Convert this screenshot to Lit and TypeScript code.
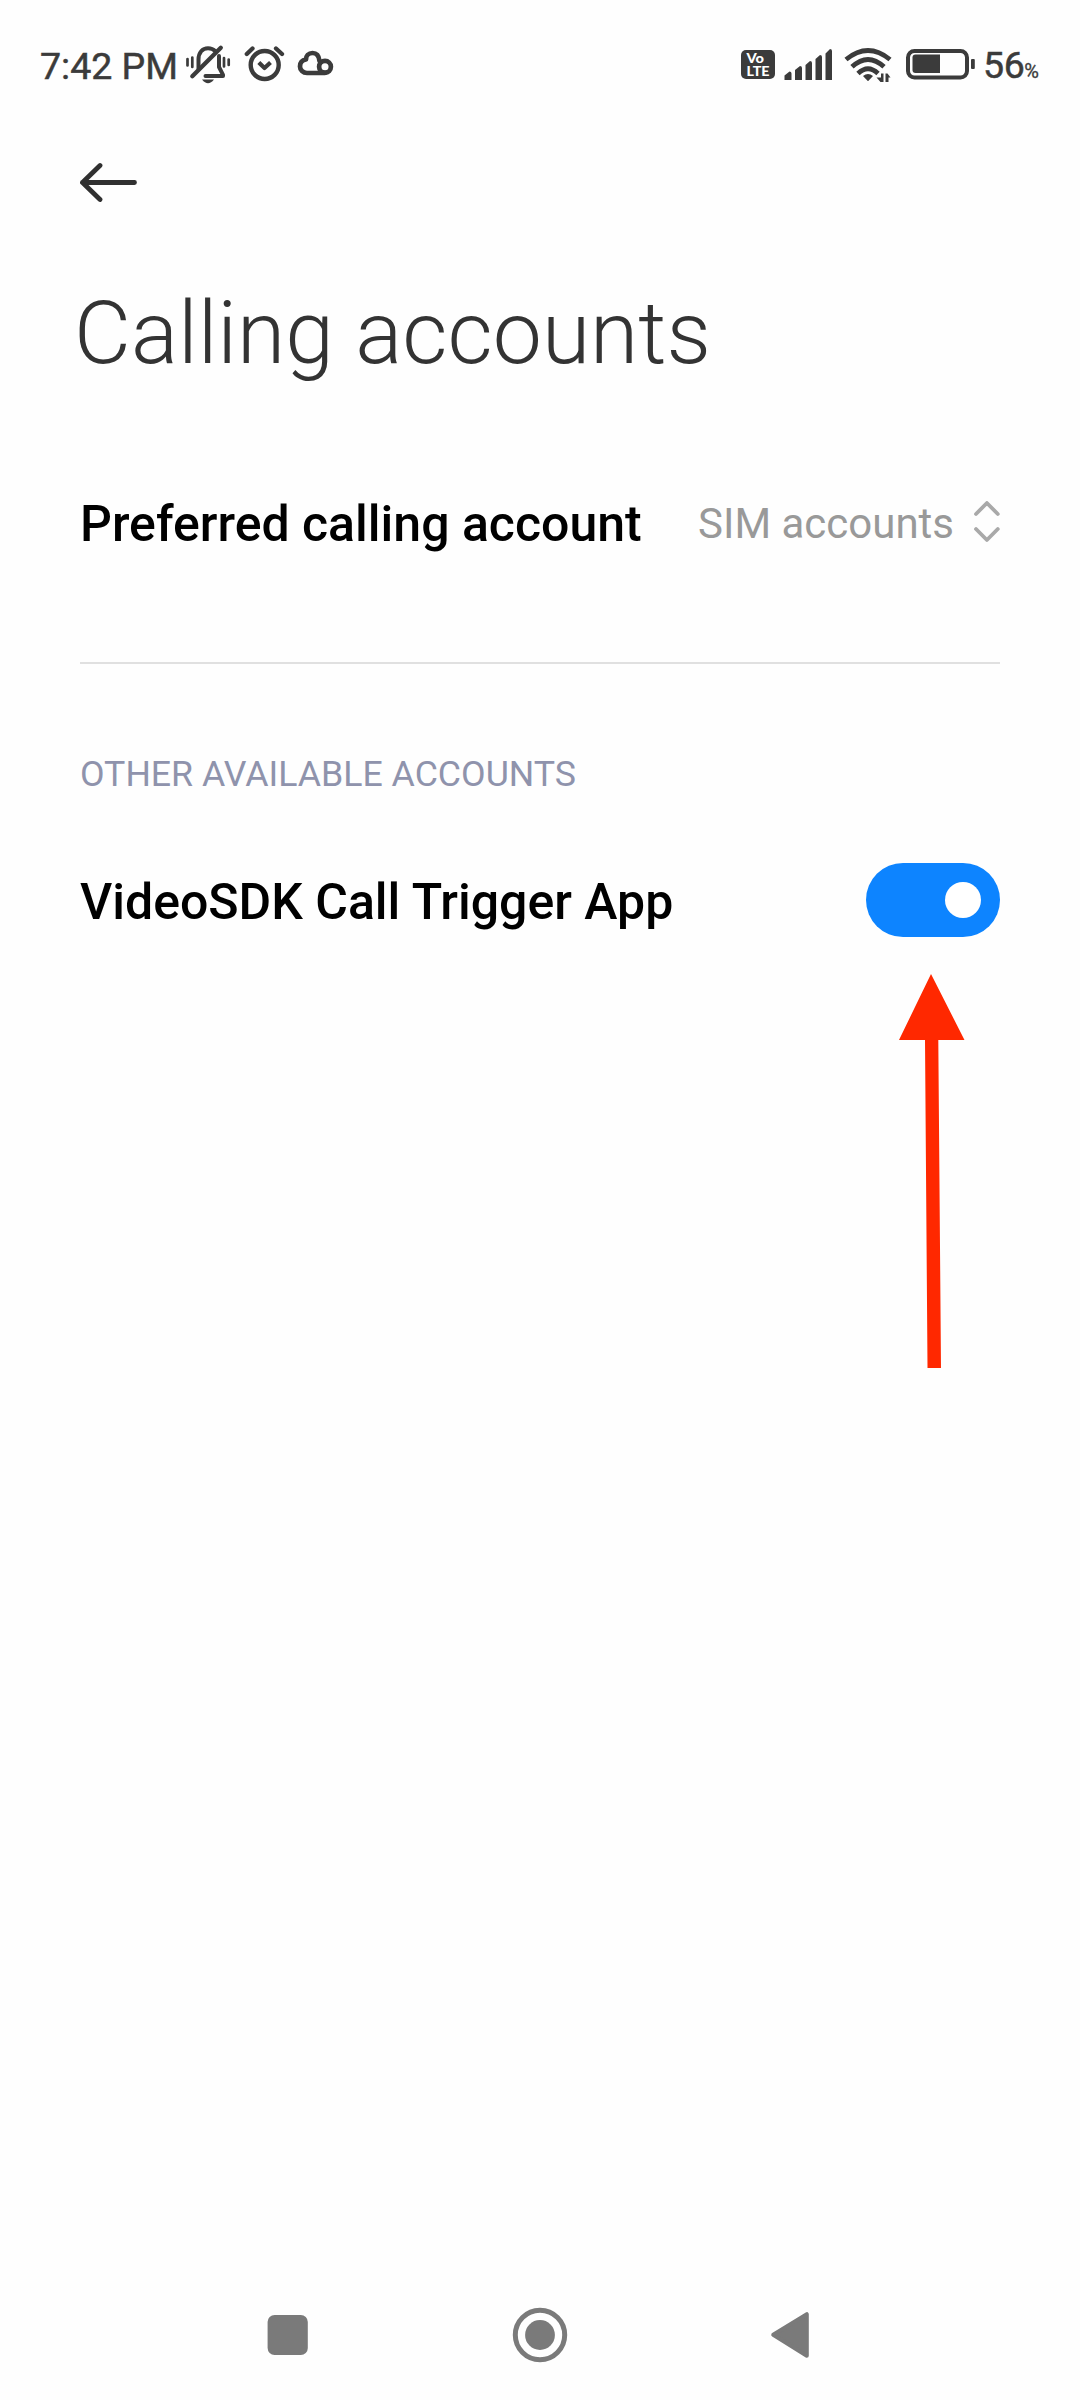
import { LitElement, html, css } from "lit";
import { customElement, property, state } from "lit/decorators.js";

@customElement("status-bar")
class StatusBar extends LitElement {
  static styles = css`
    :host { display: flex; height: 132px; box-sizing: border-box; padding: 0 41px 0 40px; justify-content: space-between; color: #3b3b3b; }
    .side { display: flex; height: 132px; align-items: center; }
    .time { font-size: 37.5px; line-height: 132px; font-weight: 400; -webkit-text-stroke: 0.5px #3b3b3b; width: 146px; white-space: nowrap; }
    .level { font-size: 37.5px; line-height: 132px; -webkit-text-stroke: 0.5px #3b3b3b; white-space: nowrap; display: flex; align-items: baseline; letter-spacing: -0.4px; padding-top: 4px; }
    .percent { font-size: 20px; letter-spacing: 0; -webkit-text-stroke: 0.3px #3b3b3b; }
    svg { display: block; }
    .lte { font: 900 13.5px Lato, "Open Sans", sans-serif; fill: #fff; }
  `;
  render() {
    return html`
      <div class="side">
        <div class="time">7:42 PM</div>
        <svg width="150" height="50" viewBox="186 41 150 50" fill="none" stroke="#3b3b3b" stroke-linecap="round" stroke-linejoin="round">
          <path d="M187.500 59v6.500M192.300 57.500v9.500M224 58v8.500M228.700 59.500v5.500" stroke-width="2.700"/>
          <path d="M198.500 69V59.500C198.500 52.500 202.500 48.200 208 48.200C211 48.200 213.500 49.300 215.300 51.200" stroke-width="4"/>
          <path d="M219 56V67L223 74.800V76H205.500" stroke-width="4"/>
          <path d="M192.300 76.200L220.800 47.800" stroke-width="4.300"/>
          <path d="M202 79.500H214Q208 87 202 79.500Z" fill="#3b3b3b" stroke="none"/>
          <circle cx="264.700" cy="65" r="14" stroke-width="4.400"/>
          <path d="M258.800 62.500L264.500 68L270.500 62.500" stroke-width="4.200" stroke-linecap="butt"/>
          <path d="M246.800 54L252.500 48.500M276 48.500L282 54" stroke-width="4.300"/>
          <path d="M325 73H307C303 73 300 70 300 66.500C300 62.500 302.500 60 306 59.500C306 56 308.500 53 312.500 53C316.500 53 319 56 319.500 61" stroke-width="4.700"/>
          <circle cx="325" cy="66.800" r="5.900" stroke-width="4.700"/>
        </svg>
      </div>
      <div class="side">
        <svg width="243" height="50" viewBox="740 41 243 50" fill="#3b3b3b">
          <rect x="741" y="50" width="34" height="29" rx="5"/>
          <text class="lte" x="746.500" y="63" textLength="17.500" lengthAdjust="spacingAndGlyphs">Vo</text>
          <text class="lte" x="746.500" y="75.700" textLength="23" lengthAdjust="spacingAndGlyphs">LTE</text>
          <path d="M784.500 80V75.500L789.500 71.500Q791.500 71.500 791.500 73.500V80ZM795 80V70L800 66Q802 66 802 68V80ZM805.500 80V65L810 61Q812 61 812 63V80ZM815.500 80V59L820 55Q822 55 822 57V80ZM825.500 80V53.500L830 49Q832 49 832 51V80Z"/>
          <g fill="none" stroke="#3b3b3b" stroke-width="4.800">
            <path d="M846 59.500Q868 41.500 890 59.500"/>
            <path d="M852 66.800Q868 52 884 66.800"/>
            <path d="M858 73.500Q868 64 878 73.500"/>
          </g>
          <path d="M863 76Q868 72 873 76L868.500 80.800Q868 81.200 867.500 80.800Z"/>
          <path d="M881 73.500H883.500V82H880.500L876.500 77.500H881ZM885.500 73.500H887.500L890.500 77.500H888.500V82H885.500Z"/>
          <rect x="908" y="51" width="59" height="26.500" rx="6.500" fill="none" stroke="#3b3b3b" stroke-width="4"/>
          <path d="M915.500 54.500H940V73H915.500Q912.500 73 912.500 70V57.500Q912.500 54.500 915.500 54.500Z"/>
          <rect x="971" y="59" width="3.800" height="10" rx="1"/>
        </svg>
        <div class="level">56<span class="percent">%</span></div>
      </div>`;
  }
}

@customElement("toggle-switch")
class ToggleSwitch extends LitElement {
  @property({ type: Boolean }) on = false;
  static styles = css`
    :host { display: block; }
    .track { width: 134px; height: 74px; box-sizing: border-box; padding: 0 19px; border-radius: 37px; background: #c8c8c8; display: flex; align-items: center; }
    .on { background: #0d84ff; justify-content: flex-end; }
    .knob { width: 36px; height: 36px; border-radius: 50%; background: #fff; }
  `;
  render() {
    return html`<div class="track ${this.on ? "on" : ""}"><div class="knob"></div></div>`;
  }
}

@customElement("nav-bar")
class NavBar extends LitElement {
  static styles = css`
    :host { display: flex; height: 130px; align-items: center; justify-content: space-between; padding: 0 270px 0 267px; box-sizing: border-box; }
    svg { display: block; }
  `;
  render() {
    return html`
      <svg width="42" height="56" viewBox="267 2307 42 56"><rect x="267.600" y="2315" width="40.200" height="40" rx="7" fill="#7a7a7a"/></svg>
      <svg width="56" height="56" viewBox="0 0 56 56"><circle cx="28" cy="28" r="24.700" fill="none" stroke="#7a7a7a" stroke-width="5"/><circle cx="28" cy="28" r="14.900" fill="#7a7a7a"/></svg>
      <svg width="40" height="56" viewBox="770 2307 40 56"><path d="M773.200 2334.700L806.800 2314.200V2355.700Z" fill="#7a7a7a" stroke="#7a7a7a" stroke-width="4" stroke-linejoin="round"/></svg>`;
  }
}

@customElement("app-root")
class AppRoot extends LitElement {
  @state() private enabled = true;
  static styles = css`
    :host { display: flex; flex-direction: column; position: relative; width: 1080px; height: 2400px; background: #fefefe; font-family: Roboto, "Liberation Sans", sans-serif; overflow: hidden; }
    main { flex: 1; display: flex; flex-direction: column; padding: 0 80px; }
    svg { display: block; }
    .back { height: 101px; display: flex; align-items: center; }
    h1 { margin: 43px 0 0 -6px; height: 114px; line-height: 114px; font-size: 87.7px; font-weight: 300; color: #333; white-space: nowrap; }
    .row { display: flex; justify-content: space-between; align-items: center; white-space: nowrap; }
    .preferred { height: 120px; margin-top: 74px; padding-bottom: 78px; border-bottom: 2px solid #e0e0e0; }
    .label { font-size: 50px; line-height: 60px; font-weight: 500; color: #000; }
    .account .label { padding-top: 3px; }
    .choice { display: flex; align-items: center; gap: 19px; }
    .value { font-size: 42px; line-height: 60px; color: #999; }
    h2 { margin: 80px 0 0; height: 60px; line-height: 60px; font-size: 35.7px; font-weight: 400; color: #8f93ac; white-space: nowrap; }
    .account { height: 120px; margin-top: 36px; }
    .pointer { position: absolute; left: 895px; top: 970px; }
  `;
  render() {
    return html`
      <status-bar></status-bar>
      <main>
        <div class="back">
          <svg width="60" height="44" viewBox="80 161 60 44" fill="none" stroke="#303030" stroke-width="4.800" stroke-linecap="round" stroke-linejoin="round"><path d="M100 165.500L82.500 182.500L100 199.500M82.500 182.500H134.500"/></svg>
        </div>
        <h1>Calling accounts</h1>
        <div class="row preferred">
          <div class="label">Preferred calling account</div>
          <div class="choice">
            <div class="value">SIM accounts</div>
            <svg width="27" height="46" viewBox="973 500.500 27 46" fill="none" stroke="#a9a9a9" stroke-width="3.800" stroke-linecap="round" stroke-linejoin="round"><path d="M976 513.500L986.900 502.500L997.800 513.500M976 528.500L986.900 539.500L997.800 528.500"/></svg>
          </div>
        </div>
        <h2>OTHER AVAILABLE ACCOUNTS</h2>
        <div class="row account">
          <div class="label">VideoSDK Call Trigger App</div>
          <toggle-switch ?on=${this.enabled}></toggle-switch>
        </div>
      </main>
      <nav-bar></nav-bar>
      <svg class="pointer" width="75" height="402" viewBox="895 970 75 402"><path d="M931 974L964.500 1040H938.300L941 1368H927.500L925 1040H899Z" fill="#ff2800"/></svg>`;
  }
}
